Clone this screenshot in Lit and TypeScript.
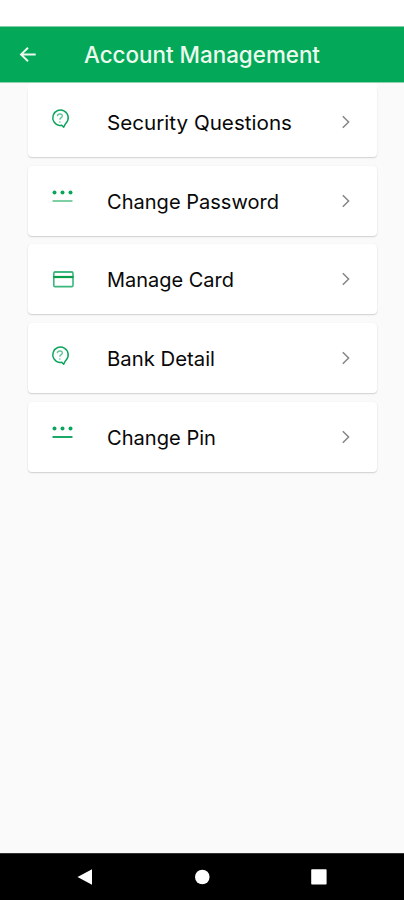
import { LitElement, html, css, svg } from "lit";
import { customElement } from "lit/decorators.js";

const question = svg`
  <path d="M8.6 17.4 A7.7 7.7 0 1 1 15.3 14.8 Q13.9 16.4 12.7 19.2 L10.8 17.3 Q9.8 17.5 8.6 17.4 Z" fill="none" stroke="#0ba45c" stroke-width="1.5" stroke-linejoin="round"/>
  <path d="M6.3 8.1 Q6.5 5.8 8.9 5.8 Q11.4 5.9 11.3 8 Q11.2 9.2 9.9 9.9 Q8.9 10.5 8.9 11.8" fill="none" stroke="#59c28f" stroke-width="1.3"/>
  <circle cx="8.9" cy="14" r=".8" fill="#59c28f"/>`;

const dots = (line: string) => svg`
  <g fill="#0ba45c">
    <circle cx="3.5" cy="5.5" r="2"/><circle cx="11.5" cy="5.5" r="2"/><circle cx="19.5" cy="5.5" r="2"/>
  </g>
  <rect x="1.5" y="13" width="20" height="2" rx=".6" fill=${line}/>`;

const card = svg`
  <rect x="2.8" y="6" width="19.2" height="14.6" rx="1.2" fill="none" stroke="#3bb67d" stroke-width="1.6"/>
  <path d="M2.3 11 H22.5" stroke="#0b9f4c" stroke-width="2.2"/>
  <path d="M3 6 H21.8" stroke="#1fab6a" stroke-width="1"/>`;

const items = [
  { label: "Security Questions", icon: question, width: 185 },
  { label: "Change Password", icon: dots("#7fcfa5"), width: 172 },
  { label: "Manage Card", icon: card, width: 127 },
  { label: "Bank Detail", icon: question, width: 108 },
  { label: "Change Pin", icon: dots("#19a865"), width: 109 },
];

@customElement("app-root")
export class AppRoot extends LitElement {
  static styles = css`
    :host {
      display: flex;
      flex-direction: column;
      height: 900px;
      background: #fafafa;
      font-family: Inter, "Open Sans", sans-serif;
    }
    svg { display: block; overflow: visible; flex: none; }
    .status { height: 26px; background: #fff; flex: none; }
    .bar {
      height: 56px;
      flex: none;
      display: flex;
      align-items: center;
      background: #03a859;
      border-top: 1px solid #80d0a8;
      box-shadow: 0 1px 0 #8dd3ae;
      box-sizing: border-box;
      z-index: 1;
    }
    .back { margin-left: 19px; margin-top: 1px; }
    .title { margin-left: 47px; margin-top: 1px; }
    .list {
      flex: 1;
      display: flex;
      flex-direction: column;
      gap: 8.75px;
      padding: 4.9px 27px 0 28px;
    }
    .row {
      height: 70px;
      box-sizing: border-box;
      display: flex;
      align-items: center;
      padding: 0 25px 0 23px;
      background: #fff;
      border-radius: 4px;
      box-shadow: 0 1px 1.5px rgba(0, 0, 0, 0.17), 0 0 2px rgba(0, 0, 0, 0.04);
    }
    .row:first-child { box-shadow: 0 1px 1.5px rgba(0, 0, 0, 0.17), 0 -4px 0 #fff; }
    .icon { align-self: flex-start; margin-top: 21.4px; }
    .label { flex: 1 1 0; width: 0; min-width: 0; margin-left: 32px; }
    .nav {
      height: 47px;
      flex: none;
      box-sizing: border-box;
      display: flex;
      align-items: center;
      background: #000;
      border-top: 1px solid #333;
      padding: 0 77px;
      justify-content: space-between;
    }
  `;

  render() {
    return html`
      <div class="status"></div>
      <header class="bar">
        <svg class="back" width="18" height="18" viewBox="0 0 18 18">
          <path d="M16.7 8.5H2.2M9 1.7L2 8.5l7 6.8" fill="none" stroke="#ecfaef" stroke-width="1.9"/>
        </svg>
        <svg class="title" width="236" height="32">
          <text x="0" y="23.5" font-size="22.5" font-weight="500" fill="#edfbee" textLength="236" lengthAdjust="spacingAndGlyphs">Account Management</text>
        </svg>
      </header>
      <main class="list">
        ${items.map(
          (item) => html`
            <div class="row">
              <svg class="icon" width="24" height="24" viewBox="0 0 24 24">${item.icon}</svg>
              <svg class="label" height="28">
                <text x="0" y="21.5" font-size="20" fill="#080808" textLength=${item.width} lengthAdjust="spacingAndGlyphs">${item.label}</text>
              </svg>
              <svg width="12" height="16" viewBox="0 0 12 16">
                <path d="M2.8 2.2L8.6 8l-5.8 5.8" fill="none" stroke="#858585" stroke-width="1.5"/>
              </svg>
            </div>
          `
        )}
      </main>
      <footer class="nav">
        <svg width="16" height="16"><path d="M.5 8L15 .2v15.6z" fill="#fff"/></svg>
        <svg width="16" height="16"><circle cx="8.3" cy="8" r="7.3" fill="#fff"/></svg>
        <svg width="16" height="16"><rect x=".2" y=".2" width="15.4" height="15.4" rx=".8" fill="#fff"/></svg>
      </footer>
    `;
  }
}
